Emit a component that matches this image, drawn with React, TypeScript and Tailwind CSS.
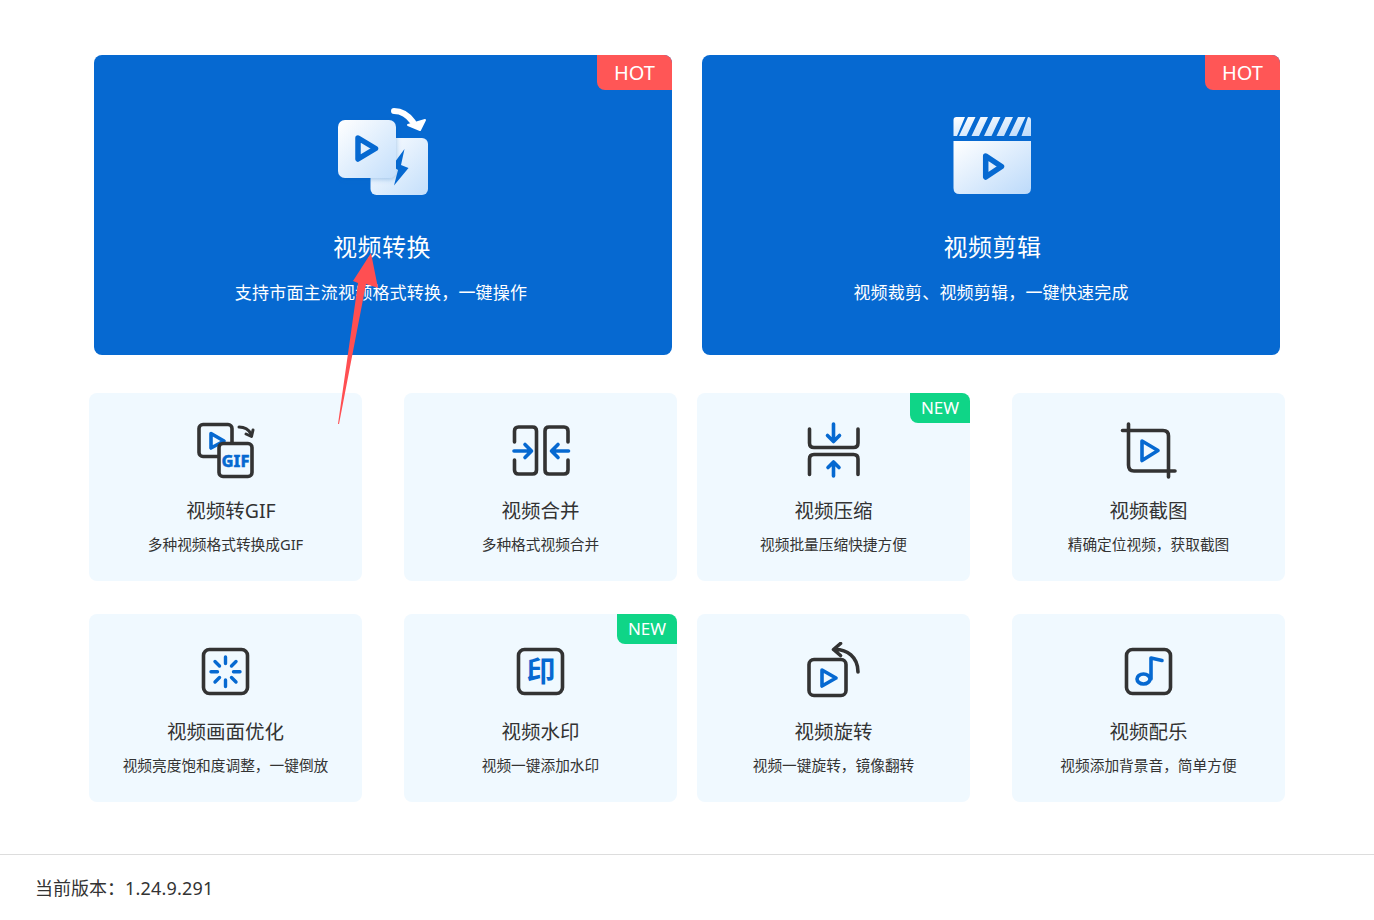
const FONT = "font-['Noto_Sans','Noto_Sans_CJK_SC',sans-serif]";
const BLUE = "#0669d1";
const DARK = "#333333";

function Badge({ type }: { type: "HOT" | "NEW" }) {
  if (type === "HOT") {
    return (
      <div className="absolute top-0 right-0 w-[75px] h-[35px] bg-[#ff5656] text-white text-[20px] flex items-center justify-center rounded-tr-lg rounded-bl-lg">
        HOT
      </div>
    );
  }
  return (
    <div className="absolute top-0 right-0 w-[60px] h-[30px] bg-[#0fd587] text-white text-[17px] flex items-center justify-center rounded-tr-lg rounded-bl-lg">
      NEW
    </div>
  );
}

function Play({ d, w = 3.6 }: { d: string; w?: number }) {
  return <path d={d} fill="none" stroke={BLUE} strokeWidth={w} strokeLinejoin="round" strokeLinecap="round" />;
}

function ConvertIcon() {
  return (
    <svg width="90" height="90" viewBox="0 0 90 90">
      <defs>
        <linearGradient id="g1" x1="0" y1="0" x2="1" y2="1">
          <stop offset="0" stopColor="#ffffff" />
          <stop offset="1" stopColor="#c4dffb" />
        </linearGradient>
        <filter id="s1" x="-20%" y="-20%" width="140%" height="140%">
          <feDropShadow dx="1" dy="2" stdDeviation="2" floodColor="#0b5fb8" floodOpacity="0.25" />
        </filter>
      </defs>
      <path d="M56 5 C63 5 70 9 75 16" fill="none" stroke="#fff" strokeWidth="6" strokeLinecap="round" />
      <path d="M70 19 L87 14 L82 24 Z" fill="#fff" stroke="#fff" strokeWidth="2" strokeLinejoin="round" />
      <rect x="32.5" y="32" width="57.5" height="57" rx="6" fill="url(#g1)" />
      <path d="M66.5 43 L63 59 L70.5 62 L56 79.5 L60 64 L54 60 Z" fill={BLUE} />
      <rect x="0" y="14" width="58" height="58" rx="7" fill="url(#g1)" filter="url(#s1)" />
      <Play d="M20 32 L37.5 42.5 L20 53 Z" w={5.5} />
    </svg>
  );
}

function ClapperIcon() {
  return (
    <svg width="90" height="90" viewBox="0 0 90 90">
      <defs>
        <linearGradient id="g2" x1="0" y1="0" x2="1" y2="1">
          <stop offset="0" stopColor="#ffffff" />
          <stop offset="1" stopColor="#bcdafa" />
        </linearGradient>
      </defs>
      <path
        d="M7.5 14 Q7.5 11 10.5 11 L19 11 L11 30 L7.5 30 Z M22 11 L29.5 11 L20.5 30 L13 30 Z M34.5 11 L42 11 L33 30 L25.5 30 Z M47 11 L54.5 11 L45.5 30 L38 30 Z M59.5 11 L67 11 L58 30 L50.5 30 Z M72 11 L79.5 11 L70.5 30 L63 30 Z M82 11 Q85 11 85 14 L85 30 L75.5 30 Z"
        fill="url(#g2)"
      />
      <path d="M7.5 35 H85 V82 Q85 88 79 88 H13.5 Q7.5 88 7.5 82 Z" fill="url(#g2)" />
      <Play d="M39.7 50 L55.5 60.5 L39.7 71 Z" w={5.5} />
    </svg>
  );
}

function GifIcon() {
  return (
    <svg width="60" height="60" viewBox="0 0 60 60">
      <rect x="3" y="3.5" width="33" height="32" rx="4" fill="none" stroke={DARK} strokeWidth="3.6" />
      <Play d="M15 12.5 L28 20 L15 27 Z" />
      <path d="M43 6 C49 6 53 9 55 13" fill="none" stroke={DARK} strokeWidth="3" strokeLinecap="round" />
      <path d="M50 13 L55.5 15.5 L57 9" fill="none" stroke={DARK} strokeWidth="3" strokeLinecap="round" strokeLinejoin="round" />
      <rect x="23" y="22.5" width="33" height="33" rx="4" fill="#f0f9ff" stroke={DARK} strokeWidth="3.6" />
      <text x="39.5" y="46" textAnchor="middle" fontSize="16.5" fontWeight="800" stroke={BLUE} strokeWidth="0.4" fill={BLUE} fontFamily="'Noto Sans',sans-serif">GIF</text>
    </svg>
  );
}

function MergeIcon() {
  return (
    <svg width="60" height="60" viewBox="0 0 60 60">
      <g fill="none" stroke={DARK} strokeWidth="3.6" strokeLinecap="round" strokeLinejoin="round">
        <path d="M3.5 21 V10 Q3.5 6 7.5 6 H21.5 Q25.5 6 25.5 10 V49 Q25.5 53 21.5 53 H7.5 Q3.5 53 3.5 49 V39" />
        <path d="M57 21 V10 Q57 6 53 6 H38 Q34 6 34 10 V49 Q34 53 38 53 H53 Q57 53 57 49 V39" />
      </g>
      <g fill="none" stroke={BLUE} strokeWidth="3.6" strokeLinecap="round" strokeLinejoin="round">
        <path d="M3 30 H20 M14 23.5 L20.5 30 L14 36.5" />
        <path d="M57.5 30 H40.5 M47 23.5 L40.5 30 L47 36.5" />
      </g>
    </svg>
  );
}

function CompressIcon() {
  return (
    <svg width="60" height="60" viewBox="0 0 60 60">
      <g fill="none" stroke={DARK} strokeWidth="3.6" strokeLinecap="round" strokeLinejoin="round">
        <path d="M5.5 8 V22 Q5.5 26.5 10 26.5 H49.5 Q54 26.5 54 22 V8" />
        <path d="M5.5 53.5 V38 Q5.5 33.5 10 33.5 H49.5 Q54 33.5 54 38 V53.5" />
      </g>
      <g fill="none" stroke={BLUE} strokeWidth="3.6" strokeLinecap="round" strokeLinejoin="round">
        <path d="M29.5 3 V20 M23.5 14.5 L29.5 20.5 L35.5 14.5" />
        <path d="M29.5 55 V41 M24 46.5 L29.5 41 L35 46.5" />
      </g>
    </svg>
  );
}

function CropIcon() {
  return (
    <svg width="60" height="60" viewBox="0 0 60 60">
      <path d="M3.5 9.5 H44 Q49.5 9.5 49.5 15 V56 M9.5 3 V44 Q9.5 50 15 50 H56" fill="none" stroke={DARK} strokeWidth="3.6" strokeLinecap="round" />
      <Play d="M23 20 L39 29.5 L23 39.5 Z" />
    </svg>
  );
}

function EnhanceIcon() {
  return (
    <svg width="60" height="60" viewBox="0 0 60 60">
      <rect x="7.5" y="7.5" width="44" height="44" rx="6" fill="none" stroke={DARK} strokeWidth="3.6" />
      <g stroke={BLUE} strokeWidth="3.4" strokeLinecap="round">
        <path d="M29.5 15 V21.5 M29.5 38 V44.5 M15 29.7 H21.5 M37.5 29.7 H44" />
        <path d="M19 19.5 L23.5 24 M35.5 35.5 L40 40 M19 40 L23.5 35.5 M35.5 24 L40 19.5" />
      </g>
    </svg>
  );
}

function StampIcon() {
  return (
    <svg width="60" height="60" viewBox="0 0 60 60">
      <rect x="7.5" y="7.5" width="44" height="44" rx="6" fill="none" stroke={DARK} strokeWidth="3.6" />
      <text x="30" y="40" textAnchor="middle" fontSize="29" fontWeight="700" fill={BLUE} fontFamily="'Noto Sans CJK SC',sans-serif">印</text>
    </svg>
  );
}

function RotateIcon() {
  return (
    <svg width="60" height="60" viewBox="0 0 60 60">
      <rect x="5" y="17.5" width="37" height="36" rx="5" fill="none" stroke={DARK} strokeWidth="3.6" />
      <Play d="M18 28 L32 36 L18 44 Z" />
      <path d="M30 7.5 C43 7 54 15 54 30 M36.5 1.5 L29.5 7.5 L36.5 13.5" fill="none" stroke={DARK} strokeWidth="3.6" strokeLinecap="round" strokeLinejoin="round" />
    </svg>
  );
}

function MusicIcon() {
  return (
    <svg width="60" height="60" viewBox="0 0 60 60">
      <rect x="7.5" y="7.5" width="44" height="44" rx="6" fill="none" stroke={DARK} strokeWidth="3.6" />
      <ellipse cx="24.5" cy="37" rx="6.5" ry="5" fill="none" stroke={BLUE} strokeWidth="3.6" />
      <path d="M32 37 V16 L43 18.5" fill="none" stroke={BLUE} strokeWidth="3.6" strokeLinecap="round" strokeLinejoin="round" />
    </svg>
  );
}

function BigCard({ icon, title, desc, titleClass, descClass }: { icon: React.ReactNode; title: string; desc: string; titleClass: string; descClass: string }) {
  return (
    <div className="relative w-[578px] h-[300px] mx-[5px] bg-[#0669d1] rounded-lg flex flex-col items-center text-white">
      <Badge type="HOT" />
      <div className="mt-[51px]">{icon}</div>
      <div className={`mt-[34px] text-[24px] leading-[34px] tracking-[0.5px] ${titleClass}`}>{title}</div>
      <div className={`mt-[17px] text-[17px] leading-[24px] tracking-[0.2px] ${descClass}`}>{desc}</div>
    </div>
  );
}

function SmallCard({ icon, title, desc, badge, titleClass }: { icon: React.ReactNode; title: string; desc: string; badge?: boolean; titleClass?: string }) {
  return (
    <div className="relative h-[188px] bg-[#f0f9ff] rounded-lg flex flex-col items-center text-[#333333]">
      {badge && <Badge type="NEW" />}
      <div className="mt-[28px] h-[60px]">{icon}</div>
      <div className={`mt-[15px] text-[19.5px] leading-[30px] ${titleClass ?? ""}`}>{title}</div>
      <div className="mt-[7px] text-[14.7px] leading-[22px]">{desc}</div>
    </div>
  );
}

export default function App() {
  return (
    <div className={`relative w-[1374px] h-[920px] bg-white overflow-hidden ${FONT}`}>
      <main className="px-[89px] pt-[55px]">
        <div className="grid grid-cols-2 gap-x-[20px]">
          <BigCard icon={<ConvertIcon />} title="视频转换" titleClass="mr-[2px]" descClass="mr-[4px]" desc="支持市面主流视频格式转换，一键操作" />
          <BigCard icon={<ClapperIcon />} title="视频剪辑" titleClass="ml-[3px]" descClass="ml-[0px]" desc="视频裁剪、视频剪辑，一键快速完成" />
        </div>

        <div className="mt-[38px] grid grid-cols-2 gap-x-[20px] gap-y-[33px]">
          <div className="grid grid-cols-[273px_273px] justify-between">
            <SmallCard icon={<GifIcon />} title="视频转GIF" titleClass="ml-[11px]" desc="多种视频格式转换成GIF" />
            <SmallCard icon={<MergeIcon />} title="视频合并" desc="多种格式视频合并" />
          </div>
          <div className="grid grid-cols-[273px_273px] justify-between">
            <SmallCard icon={<CompressIcon />} title="视频压缩" desc="视频批量压缩快捷方便" badge />
            <SmallCard icon={<CropIcon />} title="视频截图" desc="精确定位视频，获取截图" />
          </div>
          <div className="grid grid-cols-[273px_273px] justify-between">
            <SmallCard icon={<EnhanceIcon />} title="视频画面优化" desc="视频亮度饱和度调整，一键倒放" />
            <SmallCard icon={<StampIcon />} title="视频水印" desc="视频一键添加水印" badge />
          </div>
          <div className="grid grid-cols-[273px_273px] justify-between">
            <SmallCard icon={<RotateIcon />} title="视频旋转" desc="视频一键旋转，镜像翻转" />
            <SmallCard icon={<MusicIcon />} title="视频配乐" desc="视频添加背景音，简单方便" />
          </div>
        </div>
      </main>

      <footer className="mt-[52px] border-t border-[#dddddd] pl-[35px] pt-[20px] text-[18px] leading-[26px] text-[#333333]">
        当前版本：<span className="tracking-[0.2px]">1.24.9.291</span>
      </footer>

      {/* annotation arrow drawn over the page */}
      <svg className="absolute top-0 left-0 pointer-events-none" width="1374" height="920" viewBox="0 0 1374 920">
        <path d="M371 253 L378 288 L366 284 L339 424 L338 424 L358 283 L353 281 Z" fill="#ff4f52" />
      </svg>
    </div>
  );
}
